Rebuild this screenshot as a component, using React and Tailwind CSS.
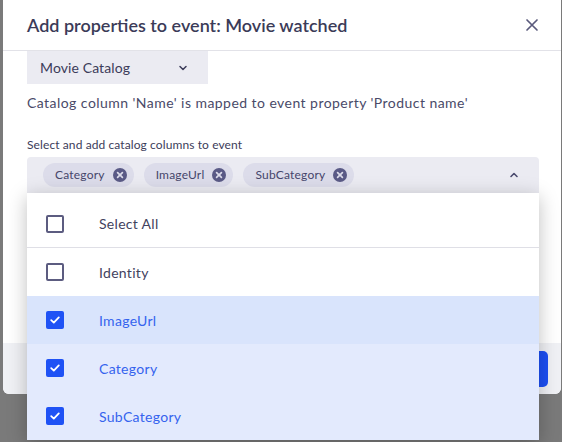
import React from "react";

const font = { fontFamily: "Lato, 'Open Sans', sans-serif" };

function Box({ checked }) {
  if (checked) {
    return (
      <div className="w-[18px] h-[18px] rounded-[2px] bg-[#1f52f5] flex items-center justify-center">
        <svg width="12" height="12" viewBox="0 0 12 12" fill="none">
          <path d="M2.2 6.2 L4.8 8.6 L9.8 3.4" stroke="white" strokeWidth="1.8" strokeLinecap="round" strokeLinejoin="round" />
        </svg>
      </div>
    );
  }
  return <div className="w-[18px] h-[18px] rounded-[2px] border-2 border-[#5c5c80] bg-white" />;
}

function Row({ label, checked, bg, border }) {
  return (
    <div className={`h-[48px] flex items-center pl-[19px] ${bg} ${border ? "border-b border-[#dfdfe6]" : ""}`}>
      <Box checked={checked} />
      <span className={`ml-[35px] text-[14px] tracking-[0.3px] ${checked ? "text-[#3563ee]" : "text-[#42425e]"}`}>{label}</span>
    </div>
  );
}

function Chip({ label }) {
  return (
    <div className="h-[24px] rounded-full bg-[#dcdcea] flex items-center pl-[12px] pr-[7px] gap-[8px]">
      <span className="text-[12px] text-[#46466a] tracking-[0.2px]">{label}</span>
      <svg width="14" height="14" viewBox="0 0 14 14">
        <circle cx="7" cy="7" r="7" fill="#5a5a86" />
        <path d="M4.6 4.6 L9.4 9.4 M9.4 4.6 L4.6 9.4" stroke="#dcdcea" strokeWidth="1.7" strokeLinecap="round" />
      </svg>
    </div>
  );
}

export default function App() {
  return (
    <div className="w-[562px] h-[442px] overflow-hidden bg-[#7a7a7a]" style={font}>
      <div className="ml-[3px] w-[558px] h-[394px] bg-white rounded-b-[6px] flex flex-col">
        <div className="h-[51px] border-b border-[#e2e2e8] flex items-center justify-between pl-[24px] pr-[22px] shrink-0">
          <span className="text-[18px] font-semibold text-[#3b3b58]">Add properties to event: Movie watched</span>
          <svg width="14" height="14" viewBox="0 0 14 14">
            <path d="M2 2 L12 12 M12 2 L2 12" stroke="#5a5a7c" strokeWidth="1.7" strokeLinecap="round" />
          </svg>
        </div>
        <div className="flex-1 pl-[24px] pr-[22px]">
          <div className="w-[181px] h-[33px] bg-[#ebebf2] flex items-center justify-between pl-[13px] pr-[19px]">
            <span className="text-[14px] text-[#3c3c5a] tracking-[0.1px]">Movie Catalog</span>
            <svg width="12" height="12" viewBox="0 0 12 12" fill="none">
              <path d="M3 4.5 L6 7.5 L9 4.5" stroke="#3c3c5a" strokeWidth="1.5" strokeLinecap="round" strokeLinejoin="round" />
            </svg>
          </div>
          <div className="mt-[10px] text-[14px] text-[#4a4a68] leading-[18px] tracking-[0.45px]">Catalog column 'Name' is mapped to event property 'Product name'</div>
          <div className="mt-[26px] text-[12px] text-[#3c3c5a] leading-[14px] tracking-[0.1px]">Select and add catalog columns to event</div>
          <div className="relative mt-[5px]">
            <div className="h-[36px] bg-[#ebebf2] rounded-t-[4px] flex items-center pl-[16px] pr-[19px]">
              <div className="flex gap-[10px]">
                <Chip label="Category" />
                <Chip label="ImageUrl" />
                <Chip label="SubCategory" />
              </div>
              <div className="ml-auto">
                <svg width="12" height="12" viewBox="0 0 12 12" fill="none">
                  <path d="M3 7.5 L6 4.5 L9 7.5" stroke="#4a4a6e" strokeWidth="1.6" strokeLinecap="round" strokeLinejoin="round" />
                </svg>
              </div>
            </div>
            <div className="absolute left-0 right-0 top-full bg-white shadow-[0_4px_18px_rgba(0,0,0,0.25)] pt-[7px] z-10">
              <Row label="Select All" checked={false} bg="bg-white" border />
              <Row label="Identity" checked={false} bg="bg-white" />
              <Row label="ImageUrl" checked bg="bg-[#d9e4fc]" />
              <Row label="Category" checked bg="bg-[#e3eafd]" />
              <Row label="SubCategory" checked bg="bg-[#e3eafd]" />
            </div>
          </div>
        </div>
        <div className="h-[51px] bg-[#f0f1f5] rounded-b-[6px] flex items-center justify-end pr-[13px] shrink-0">
          <div className="w-[80px] h-[36px] bg-[#1d50f5] rounded-[5px]" />
        </div>
      </div>
    </div>
  );
}
